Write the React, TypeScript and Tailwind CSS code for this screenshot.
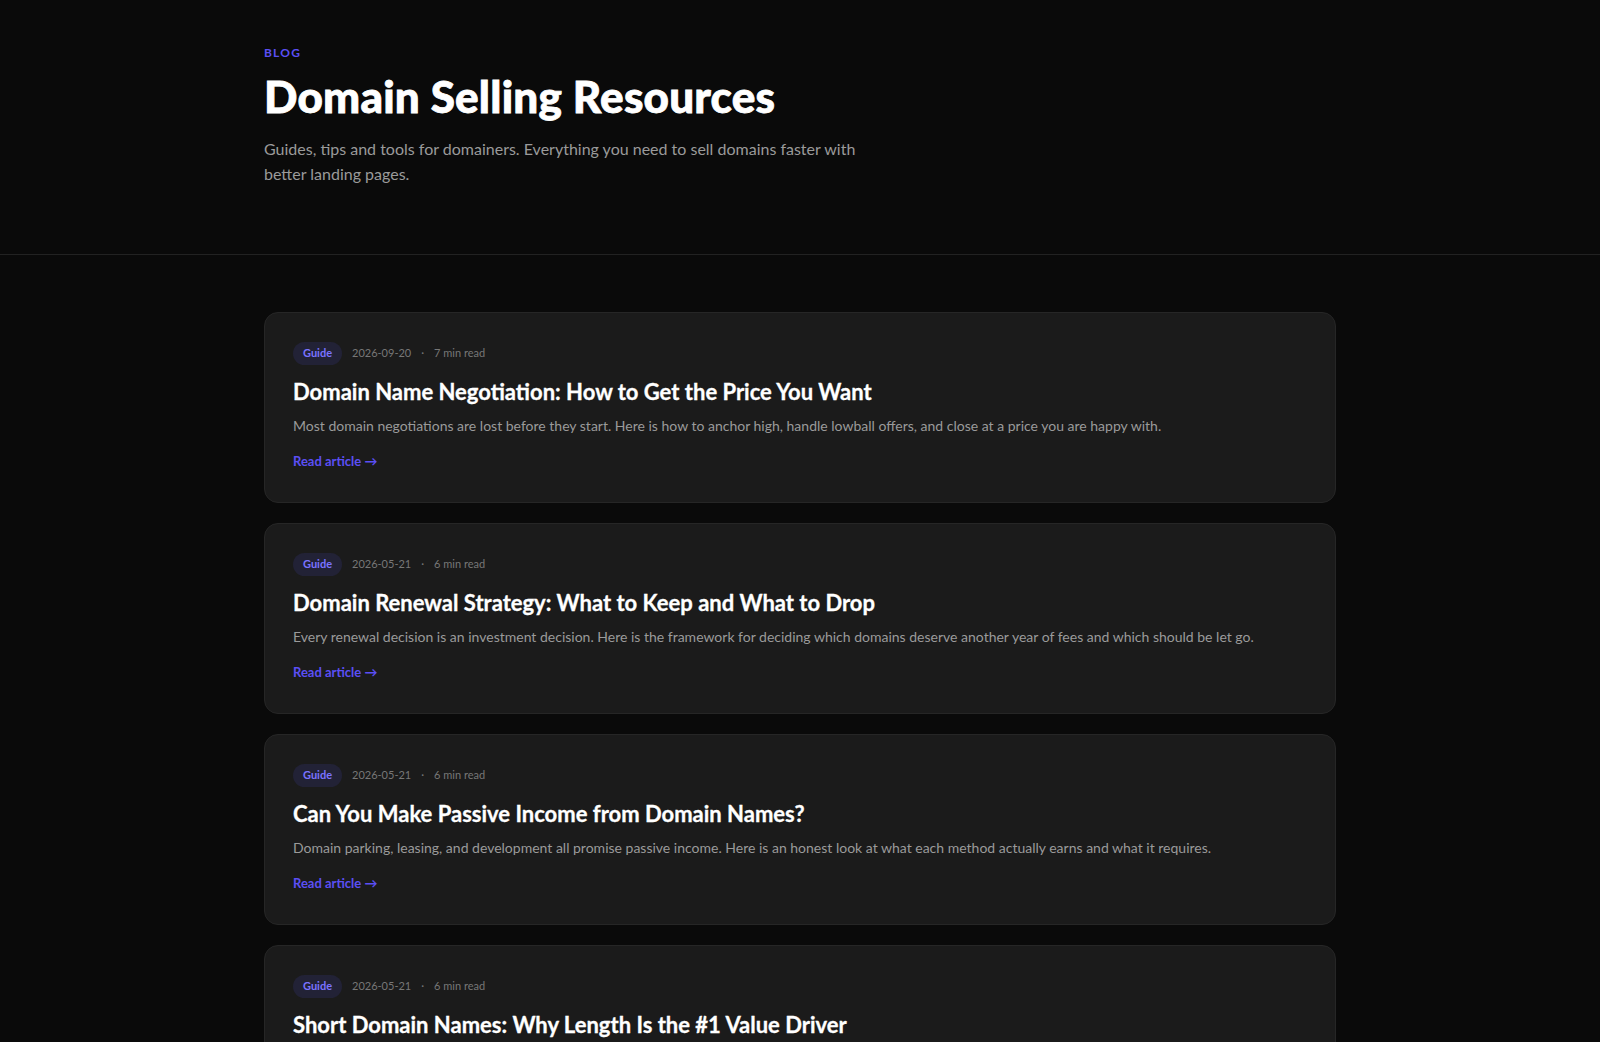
const posts = [
  { date: "2026-09-20", read: "7 min read", title: "Domain Name Negotiation: How to Get the Price You Want", desc: "Most domain negotiations are lost before they start. Here is how to anchor high, handle lowball offers, and close at a price you are happy with." },
  { date: "2026-05-21", read: "6 min read", title: "Domain Renewal Strategy: What to Keep and What to Drop", desc: "Every renewal decision is an investment decision. Here is the framework for deciding which domains deserve another year of fees and which should be let go." },
  { date: "2026-05-21", read: "6 min read", title: "Can You Make Passive Income from Domain Names?", desc: "Domain parking, leasing, and development all promise passive income. Here is an honest look at what each method actually earns and what it requires." },
  { date: "2026-05-21", read: "6 min read", title: "Short Domain Names: Why Length Is the #1 Value Driver", desc: "Shorter names command higher prices. Here is why length matters so much and how to value short domains." },
];

export default function App() {
  return (
    <div className="min-h-screen bg-[#0a0a0a] text-white" style={{ fontFamily: "Lato, 'Noto Sans', sans-serif" }}>
      <header className="border-b border-[#222]">
        <div className="mx-auto w-[1072px] pt-[44px] pb-[68px]">
          <div className="text-[12px] font-bold tracking-[0.1em] text-[#5b4ff5]">BLOG</div>
          <h1 className="mt-[8px] text-[44px] font-black leading-[52px] tracking-[0.005em] [-webkit-text-stroke:0.8px_white]">Domain Selling Resources</h1>
          <p className="mt-[14px] w-[600px] text-[16px] leading-[25px] text-[#9a9a9a]">Guides, tips and tools for domainers. Everything you need to sell domains faster with better landing pages.</p>
        </div>
      </header>
      <main className="mx-auto flex w-[1072px] flex-col gap-[20px] pt-[57px]">
        {posts.map((p, i) => (
          <div key={i} className="rounded-[14px] border border-[#262626] bg-[#1b1b1b] px-[28px] pt-[29px] pb-[31px]">
            <div className="flex items-center gap-[10px] text-[11px] text-[#777]">
              <span className="rounded-full bg-[#222236] px-[10px] py-[3px] font-bold text-[#7b73ff]">Guide</span>
              <span>{p.date}</span>
              <span>·</span>
              <span>{p.read}</span>
            </div>
            <h2 className="mt-[12px] text-[22px] font-bold leading-[30px] [-webkit-text-stroke:0.3px_white]">{p.title}</h2>
            <p className="mt-[8px] text-[14px] leading-[22px] text-[#9a9a9a]">{p.desc}</p>
            <div className="mt-[15px] text-[13px] font-bold text-[#5b4ff5]">Read article →</div>
          </div>
        ))}
      </main>
    </div>
  );
}
